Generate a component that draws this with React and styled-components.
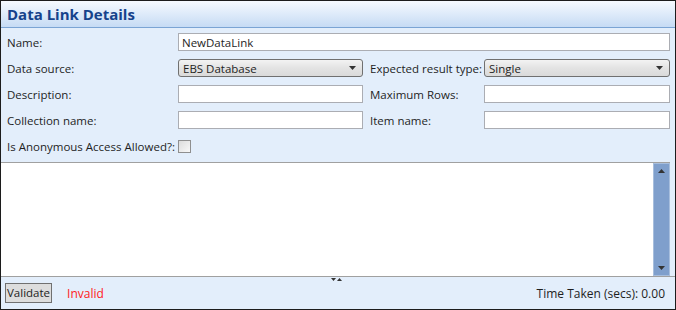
import styled, { createGlobalStyle } from "styled-components";

const GlobalStyle = createGlobalStyle`
    body {
        margin: 0;
        font-family: "Open Sans", "Noto Sans", sans-serif;
        font-size: 11.5px;
        color: #1e1e1e;
    }
`;

function ArrowIcon({ up }) {
    return (
        <svg width="7" height="4" viewBox="0 0 7 4">
            <path d={up ? "M0 4 L3.5 0 L7 4 Z" : "M0 0 L7 0 L3.5 4 Z"} fill="#333" />
        </svg>
    );
}

function Select({ value }) {
    return (
        <SelectBox>
            <span>{value}</span>
            <ArrowIcon />
        </SelectBox>
    );
}

function App() {
    return (
        <>
            <GlobalStyle />
            <Frame>
                <Header>Data Link Details</Header>
                <Form>
                    <Label>Name:</Label>
                    <Input $span defaultValue="NewDataLink" />

                    <Label>Data source:</Label>
                    <Select value="EBS Database" />
                    <Label $right>Expected result type:</Label>
                    <Select value="Single" />

                    <Label>Description:</Label>
                    <Input />
                    <Label $right>Maximum Rows:</Label>
                    <Input />

                    <Label>Collection name:</Label>
                    <Input />
                    <Label $right>Item name:</Label>
                    <Input />

                    <Label>Is Anonymous Access Allowed?:</Label>
                    <Check />
                </Form>
                <Editor>
                    <EditArea />
                    <ScrollBar>
                        <ArrowIcon up />
                        <ArrowIcon />
                    </ScrollBar>
                </Editor>
                <Splitter>
                    <ArrowIcon />
                    <ArrowIcon up />
                </Splitter>
                <Footer>
                    <Button>Validate</Button>
                    <Status>Invalid</Status>
                    <Timer>Time Taken (secs): 0.00</Timer>
                </Footer>
            </Frame>
        </>
    );
}

const Frame = styled.div`
    width: 676px;
    height: 310px;
    box-sizing: border-box;
    border: 1px solid #1c1c1c;
    background: #e3eefb;
    display: flex;
    flex-direction: column;
`;

const Header = styled.div`
    height: 26px;
    flex-shrink: 0;
    display: flex;
    align-items: center;
    padding-left: 6px;
    background: linear-gradient(#f6faff, #c6dbf4);
    border-bottom: 1px solid #7ba4d4;
    color: #15428b;
    font-weight: 700;
    font-size: 15px;
`;

const Form = styled.div`
    display: grid;
    grid-template-columns: 171px 185px 121px 186px;
    grid-auto-rows: 18px;
    row-gap: 8px;
    padding: 5px 5px 0 6px;
    align-items: center;
`;

const Label = styled.div`
    padding-left: ${(p) => (p.$right ? "7px" : "0")};
    white-space: nowrap;
`;

const Input = styled.input`
    grid-column: ${(p) => (p.$span ? "2 / 5" : "auto")};
    height: 18px;
    box-sizing: border-box;
    border: 1px solid #abadb3;
    background: #fff;
    padding: 0 3px;
    font: inherit;
    color: #1e1e1e;
    outline: none;
`;

const SelectBox = styled.div`
    height: 18px;
    box-sizing: border-box;
    border: 1px solid #707070;
    border-radius: 3px;
    background: linear-gradient(#f3f3f3, #e3e3e3 50%, #dadada);
    display: flex;
    align-items: center;
    justify-content: space-between;
    padding: 0 6px 0 4px;
`;

const Check = styled.div`
    width: 13px;
    height: 13px;
    box-sizing: border-box;
    border: 1px solid #8f8f8f;
    background: linear-gradient(135deg, #dcdcdc, #f8f8f8);
`;

const Editor = styled.div`
    flex: 1;
    display: flex;
    margin: 7px 5px 0 0;
    border-top: 1px solid #a0a0a0;
`;

const EditArea = styled.div`
    flex: 1;
    background: #fff;
`;

const ScrollBar = styled.div`
    width: 17px;
    box-sizing: border-box;
    background: #7f9fcc;
    border: 1px solid #a7bedd;
    display: flex;
    flex-direction: column;
    justify-content: space-between;
    align-items: center;
    padding: 5px 0;
`;

const Splitter = styled.div`
    border-top: 1px solid #a0a0a0;
    height: 0;
    display: flex;
    justify-content: center;
    gap: 1px;
    padding-right: 4px;

    svg {
        margin-top: 1px;
        width: 5px;
        height: 3px;
    }
`;

const Footer = styled.div`
    height: 32px;
    display: flex;
    align-items: center;
    padding: 0 10px 0 4px;
`;

const Button = styled.button`
    height: 20px;
    padding: 0 1px;
    border: 1px solid #707070;
    background: #dddddd;
    font: inherit;
    font-size: 11.5px;
    color: #1e1e1e;
    margin-top: -1px;
`;

const Status = styled.span`
    color: #ff1a1a;
    margin-left: 15px;
    font-size: 12px;
`;

const Timer = styled.span`
    margin-left: auto;
    font-size: 12px;
`;

export default App;
